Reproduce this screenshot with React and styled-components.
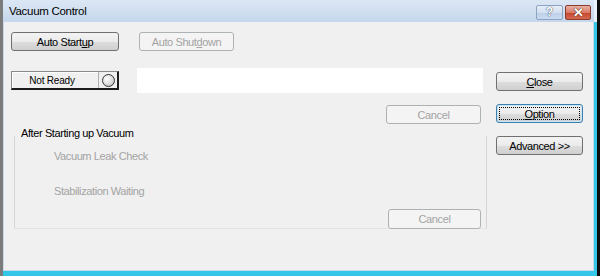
import React from 'react';
import styled, { createGlobalStyle, css } from 'styled-components';

const GlobalStyle = createGlobalStyle`
  html, body {
    margin: 0;
    padding: 0;
    background: #ffffff;
  }
  body {
    font-family: "Liberation Sans", Arial, sans-serif;
    font-size: 11px;
    color: #000;
  }
`;

const Window = styled.div`
  width: 600px;
  height: 276px;
  box-sizing: border-box;
  display: flex;
  flex-direction: column;
  border-left: 3px solid #7b7b7b;
  border-right: 3px solid #0d0d0d;
  background: #f0f0f0;
  overflow: hidden;
`;

const TitleBar = styled.div`
  height: 22px;
  flex-shrink: 0;
  display: flex;
  align-items: center;
  justify-content: space-between;
  padding: 0 3px 0 6px;
  background: linear-gradient(#dce7f4, #c5d7ed);
  border-right: 3px solid #e9f1fa;
`;

const Title = styled.span`
  font-size: 11.5px;
  color: #000;
  letter-spacing: -0.3px;
`;

const Caps = styled.div`
  display: flex;
  gap: 2px;
  margin-top: 2px;
`;

const CapButton = styled.div`
  width: ${(p) => (p.$close ? 26 : 27)}px;
  height: 15px;
  box-sizing: border-box;
  border-radius: 2px;
  display: flex;
  align-items: center;
  justify-content: center;
  font-weight: bold;
  font-size: 12px;
  line-height: 1;
  color: #fff;
  ${(p) =>
    p.$close
      ? css`
          border: 1px solid #8a3a2b;
          background: linear-gradient(#eab1a3, #d87b66 50%, #c4442d 51%, #d56a4f);
          text-shadow: 0 0 1px #4a1a10, 0 0 1px #4a1a10;
          font-size: 13px;
          transform-origin: center;
        `
      : css`
          border: 1px solid #8ea3c0;
          background: linear-gradient(#e6eef8, #d3e0f0 50%, #bccfe8 51%, #c9dbef);
          text-shadow: 0 0 1px #3a4a66, 0 0 1px #3a4a66;
        `}
`;

const Body = styled.div`
  flex: 1;
  display: flex;
  border-right: 3px solid #33c6e6;
  border-bottom: 5px solid #33c6e6;
`;

const Panel = styled.div`
  flex: 1;
  display: flex;
  gap: 9px;
  padding: 10px 0 0 7px;
  border-left: 1px solid #c9d9ec;
  border-right: 1px solid #c9d9ec;
  border-bottom: 1px solid #c9d9ec;
`;

const Main = styled.div`
  width: 476px;
  display: flex;
  flex-direction: column;
`;

const Row = styled.div`
  display: flex;
  align-items: center;
  gap: ${(p) => p.$gap}px;
  margin-top: ${(p) => p.$top || 0}px;
  height: ${(p) => p.$height}px;
`;

const ButtonRow = styled.div`
  display: flex;
  justify-content: flex-end;
  padding-right: ${(p) => p.$right}px;
  margin-top: ${(p) => p.$top}px;
`;

const Button = styled.button`
  width: ${(p) => p.$w || 87}px;
  height: ${(p) => p.$h || 19}px;
  box-sizing: border-box;
  padding: 0;
  margin: 0;
  font-family: "Liberation Sans", Arial, sans-serif;
  font-size: 11px;
  letter-spacing: -0.4px;
  border-radius: 3px;
  border: 1px solid #707070;
  color: #000;
  background: linear-gradient(#f3f3f3, #ebebeb 50%, #dddddd 51%, #cfcfcf);
  position: relative;
  ${(p) =>
    p.$focus &&
    css`
      border-color: #3c7fb1;
      box-shadow: inset 0 0 0 1px #c4e5f6;
      &::after {
        content: '';
        position: absolute;
        inset: 2px;
        border: 1px dotted #000;
      }
    `}
  &:disabled {
    border-color: #adb2b5;
    background: #f4f4f4;
    color: #a3a3a3;
  }
`;

const Underline = styled.span`
  text-decoration: underline;
`;

const Indicator = styled.div`
  width: 108px;
  height: 19px;
  box-sizing: border-box;
  display: flex;
  align-items: center;
  border-top: 1px solid #8a8a8a;
  border-left: 1px solid #8a8a8a;
  border-right: 2px solid #1c1c1c;
  border-bottom: 2px solid #1c1c1c;
  background: #f0f0f0;
`;

const IndicatorText = styled.div`
  flex: 1;
  height: 100%;
  box-sizing: border-box;
  display: flex;
  align-items: center;
  justify-content: center;
  font-size: 10px;
  letter-spacing: -0.2px;
  padding-right: 6px;
  border-right: 1px solid #b0b0b0;
  box-shadow: inset 1px 1px 0 #ffffff;
`;

const Lamp = styled.div`
  width: 13px;
  height: 13px;
  box-sizing: border-box;
  border-radius: 50%;
  border: 1px solid #333;
  margin: 0 2px 0 3px;
  background: radial-gradient(circle at 35% 35%, #ffffff, #d8d8d8 60%, #a8a8a8);
`;

const Message = styled.div`
  width: 346px;
  height: 25px;
  background: #fff;
`;

const Legend = styled.div`
  margin: 3px 0 0 10px;
  height: 13px;
  line-height: 13px;
  letter-spacing: -0.4px;
`;

const GroupFrame = styled.div`
  margin: -4px 0 0 3px;
  height: 93px;
  box-sizing: border-box;
  display: flex;
  flex-direction: column;
  padding: 14px 0 0 39px;
  border-left: 1px solid #d5d5d5;
  border-right: 1px solid #d5d5d5;
  border-bottom: 1px solid #e4e4e4;
`;

const Step = styled.div`
  height: 13px;
  line-height: 13px;
  color: #a3a3a3;
  letter-spacing: -0.4px;
  margin-bottom: ${(p) => p.$gap || 0}px;
`;

const Side = styled.div`
  display: flex;
  flex-direction: column;
  gap: 13px;
  margin-top: 40px;
`;

export default function App() {
  return (
    <>
      <GlobalStyle />
      <Window>
        <TitleBar>
          <Title>Vacuum Control</Title>
          <Caps>
            <CapButton>?</CapButton>
            <CapButton $close>✕</CapButton>
          </Caps>
        </TitleBar>
        <Body>
          <Panel>
            <Main>
              <Row $gap={20} $height={19}>
                <Button $w={108}>
                  Auto Start<Underline>u</Underline>p
                </Button>
                <Button $w={95} disabled>
                  Auto Shut<Underline>d</Underline>own
                </Button>
              </Row>
              <Row $gap={18} $height={25} $top={17}>
                <Indicator>
                  <IndicatorText>Not Ready</IndicatorText>
                  <Lamp />
                </Indicator>
                <Message />
              </Row>
              <ButtonRow $right={6} $top={12}>
                <Button $w={95} disabled>Cancel</Button>
              </ButtonRow>
              <Legend>After Starting up Vacuum</Legend>
              <GroupFrame>
                <Step $gap={22}>Vacuum Leak Check</Step>
                <Step>Stabilization Waiting</Step>
                <ButtonRow $right={5} $top={11}>
                  <Button $w={93} $h={20} disabled>Cancel</Button>
                </ButtonRow>
              </GroupFrame>
            </Main>
            <Side>
              <Button>
                <Underline>C</Underline>lose
              </Button>
              <Button $focus>
                <Underline>O</Underline>ption
              </Button>
              <Button>Advanced &gt;&gt;</Button>
            </Side>
          </Panel>
        </Body>
      </Window>
    </>
  );
}
